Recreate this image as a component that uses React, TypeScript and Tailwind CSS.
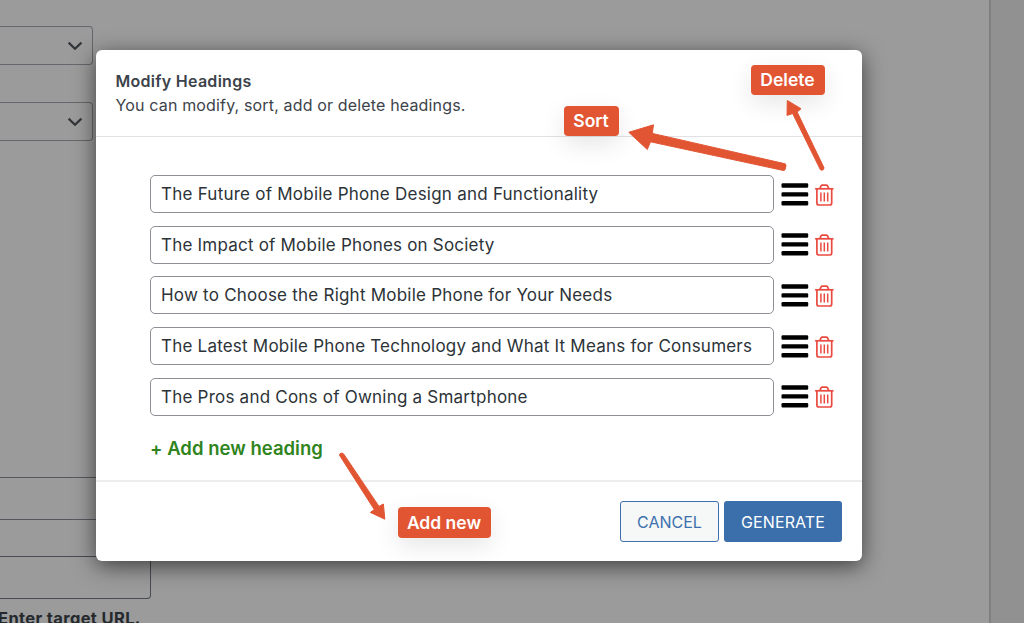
import React from "react";

type Heading = { text: string; fit: string };

const headings: Heading[] = [
  { text: "The Future of Mobile Phone Design and Functionality", fit: "tracking-[0.235px]" },
  { text: "The Impact of Mobile Phones on Society", fit: "tracking-[0.21px]" },
  { text: "How to Choose the Right Mobile Phone for Your Needs", fit: "tracking-[0.225px]" },
  { text: "The Latest Mobile Phone Technology and What It Means for Consumers", fit: "tracking-[0.21px]" },
  { text: "The Pros and Cons of Owning a Smartphone", fit: "tracking-[0.22px]" },
];

function Chevron() {
  return (
    <svg className="h-[10px] w-[16px]" viewBox="0 0 16 10" fill="none" stroke="#32363a" strokeWidth="2.2">
      <path d="M1.6 1.6 8 7.7l6.400-6.100" />
    </svg>
  );
}

function SelectBox() {
  return (
    <div className="flex h-[39px] w-[93px] shrink-0 items-center justify-end rounded-r-[4px] border-[1.5px] border-l-0 border-[#64676b] pr-[9px]">
      <Chevron />
    </div>
  );
}

function SortHandle() {
  return (
    <svg className="h-[24px] w-[28px] shrink-0" viewBox="0 0 28 24" fill="#000">
      <rect x="0.500" y="0.300" width="26.700" height="4.400" rx="1.200" />
      <rect x="0.500" y="9.200" width="26.700" height="4.400" rx="1.200" />
      <rect x="0.500" y="18" width="26.700" height="4.400" rx="1.200" />
    </svg>
  );
}

function Trash() {
  return (
    <svg className="h-[22px] w-[19px] shrink-0" viewBox="0 0 19 22" fill="none" stroke="#ea4b40" strokeWidth="1.700">
      <path d="M0.100 4.800h18.400" />
      <path d="M4.800 4.700 6.100 1.900q.4-.8 1.200-.8h4q.8 0 1.200.8L13.800 4.700" />
      <path d="M1.900 5v14q0 2 2 2h10.800q2 0 2-2V5" />
      <path d="M5.900 8.600v8.800M9.300 8.600v8.800M12.700 8.600v8.800" strokeWidth="1.500" />
    </svg>
  );
}

export default function App() {
  return (
    <div className="relative h-[623px] w-[1024px] overflow-hidden bg-[#9b9b9b] font-['Inter',sans-serif] text-[#32373c]">
      <div className="flex h-full">
        <div className="flex w-[989px] shrink-0 flex-col">
          <div className="flex shrink-0 flex-col gap-[37px] pt-[26px]">
            <SelectBox />
            <SelectBox />
          </div>
          <div className="mt-[336px] h-[42px] w-[151px] shrink-0 border-t-[1.500px] border-[#55595e]" />
          <div className="h-[37px] w-[151px] shrink-0 border-t-[1.500px] border-[#55595e]" />
          <div className="h-[43px] w-[151px] shrink-0 rounded-br-[4px] border-y-[1.500px] border-r-[1.500px] border-[#484c52]" />
          <p className="-ml-[2px] mt-[7px] shrink-0 whitespace-nowrap text-[16.500px] font-bold leading-[24px] tracking-[0.36px] text-[#25292d]">
            Enter target URL.
          </p>
        </div>
        <div className="flex-1 border-l-2 border-[#808080] bg-[#919191]" />
      </div>

      <div className="absolute inset-0 pl-[96px] pt-[50px]">
        <section className="relative flex h-[511px] w-[765.500px] flex-col rounded-[6px] bg-white shadow-[0_5px_22px_rgba(0,0,0,0.6)]">
          <header className="h-[87px] border-b border-[#e2e2e4] pl-[19.500px] pt-[20px]">
            <h1 className="text-[16px] font-semibold leading-[23px] tracking-[0.28px] text-[#3c434a]">Modify Headings</h1>
            <p className="text-[16px] leading-[24px] tracking-[0.155px] text-[#3c434a]">You can modify, sort, add or delete headings.</p>
          </header>
          <div className="flex h-[345px] flex-col border-b-2 border-[#ededed] pl-[54px] pt-[38.300px]">
            <div className="flex flex-col gap-[12.600px]">
              {headings.map((h) => (
                <div key={h.text} className="flex h-[38px] items-center">
                  <div className="flex h-[38px] w-[624px] items-center rounded-[5px] border-[1.500px] border-[#8c8f94] pl-[10px]">
                    <span className={"whitespace-nowrap text-[17px] leading-[24px] text-[#2c3338] " + h.fit}>{h.text}</span>
                  </div>
                  <div className="flex items-center gap-[6px] pl-[7px] pt-[1px]">
                    <SortHandle />
                    <Trash />
                  </div>
                </div>
              ))}
            </div>
            <button className="mt-[18px] self-start whitespace-nowrap text-[18.500px] font-semibold leading-[28px] tracking-[0.020px] text-[#2f8420]">
              + Add new heading
            </button>
          </div>
          <footer className="flex justify-end gap-[5px] pr-[19.500px] pt-[19px]">
            <button className="h-[41px] w-[99px] rounded-[3px] border-[1.500px] border-[#3d71ae] bg-[#f6f7f7] text-[16px] text-[#3d71ae]">
              CANCEL
            </button>
            <button className="h-[41px] w-[118px] rounded-[3px] bg-[#3a6fac] text-[16px] tracking-[0.100px] text-white">GENERATE</button>
          </footer>
        </section>
      </div>

      <span className="absolute left-[751px] top-[65px] flex h-[30px] w-[74px] items-center justify-center rounded-[4px] bg-[#e25533] pr-[1px] text-[17.500px] font-semibold text-white shadow-[0_8px_24px_rgba(0,0,0,0.1)]">
        Delete
      </span>
      <span className="absolute left-[564px] top-[106px] flex h-[30px] w-[55px] items-center justify-center rounded-[4px] bg-[#e25533] pr-[1px] text-[17.500px] font-semibold text-white shadow-[0_8px_24px_rgba(0,0,0,0.1)]">
        Sort
      </span>
      <span className="absolute left-[398px] top-[507px] flex h-[31px] w-[93px] items-center justify-center whitespace-nowrap rounded-[4px] bg-[#e25533] pr-[1px] pt-[1px] text-[17.500px] font-semibold text-white shadow-[0_8px_24px_rgba(0,0,0,0.1)]">
        Add new
      </span>
      <svg className="pointer-events-none absolute inset-0 h-[623px] w-[1024px]" viewBox="0 0 1024 623" fill="#e25533" stroke="#e25533" strokeLinejoin="round">
        <path strokeWidth="1" d="M628.800 132.300 653.500 124.800 652.300 133.400 785.200 163.800 786 165.500 785 169.800 783.500 170.500 650.500 141.800 647.300 149.500Z" />
        <path strokeWidth="1" d="M787.300 100.500 801 108.700 797.200 112.100 824 167.800 823.500 169.600 821.500 170.300 820.300 169.600 792.700 113.600 787 115.400Z" />
        <path strokeWidth="1" d="M384.800 519.200 370.400 512.400 374.300 509.600 339.500 455.200 340 453.700 342 453 343.600 453.900 379 506.400 383.400 504Z" />
      </svg>
    </div>
  );
}
